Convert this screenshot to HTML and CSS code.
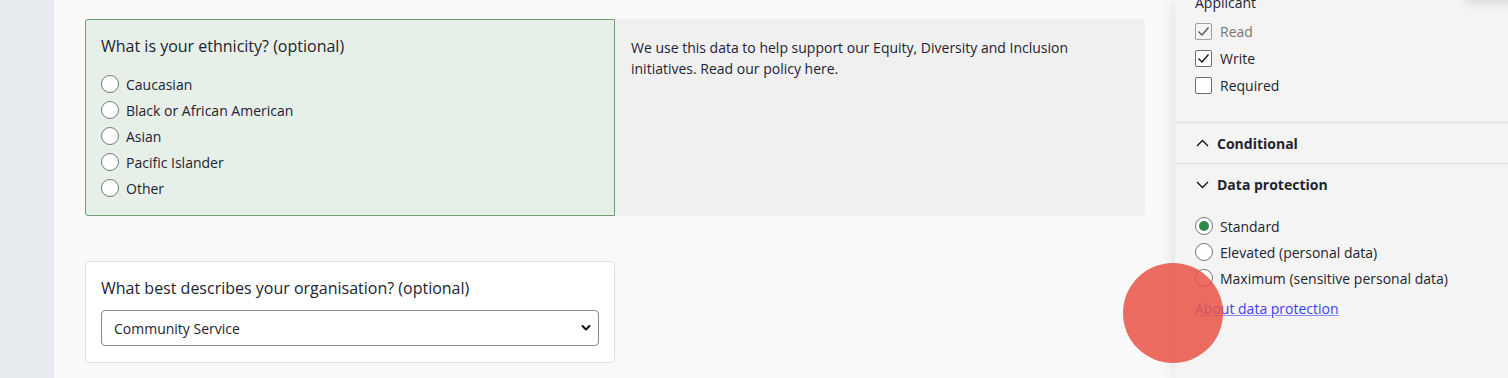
FILE: index.html
```html
<!DOCTYPE html>
<html lang="en">
<head>
<meta charset="utf-8">
<title>Form editor</title>
<link rel="stylesheet" href="styles.css">
</head>
<body>
<div class="app">
  <div class="rail"></div>
  <main class="main">
    <div class="row">
      <section class="card card-active">
        <h2 class="q-title">What is your ethnicity? (optional)</h2>
        <ul class="options">
          <li class="opt"><span class="radio"></span>Caucasian</li>
          <li class="opt"><span class="radio"></span>Black or African American</li>
          <li class="opt"><span class="radio"></span>Asian</li>
          <li class="opt"><span class="radio"></span>Pacific Islander</li>
          <li class="opt"><span class="radio"></span>Other</li>
        </ul>
      </section>
      <aside class="help">
        <p>We use this data to help support our Equity, Diversity and Inclusion initiatives. Read our policy here.</p>
      </aside>
    </div>
    <section class="card card-plain">
      <h2 class="q-title">What best describes your organisation? (optional)</h2>
      <div class="select">
        <span>Community Service</span>
        <svg class="select-chev" width="10" height="8" viewBox="0 0 10 8"><path d="M1.5 2 L5 5.5 L8.5 2" fill="none" stroke="#111" stroke-width="2" stroke-linecap="round" stroke-linejoin="round"/></svg>
      </div>
    </section>
  </main>
  <aside class="side">
    <div class="side-block">
      <div class="side-label">Applicant</div>
      <ul class="checks">
        <li class="check check-disabled"><span class="box"><svg width="13" height="11" viewBox="0 0 13 11"><path d="M1.5 5.5 L5 9 L11.5 1.5" fill="none" stroke="#555" stroke-width="1.3"/></svg></span>Read</li>
        <li class="check"><span class="box"><svg width="13" height="11" viewBox="0 0 13 11"><path d="M1.5 5.5 L5 9 L11.5 1.5" fill="none" stroke="#111" stroke-width="1.3"/></svg></span>Write</li>
        <li class="check"><span class="box"></span>Required</li>
      </ul>
    </div>
    <div class="acc-head acc-border">
      <svg width="13" height="8" viewBox="0 0 13 8"><path d="M1 7 L6.5 1.5 L12 7" fill="none" stroke="#111" stroke-width="1.3"/></svg>
      <span>Conditional</span>
    </div>
    <div class="acc-head">
      <svg width="13" height="8" viewBox="0 0 13 8"><path d="M1 1 L6.5 6.5 L12 1" fill="none" stroke="#111" stroke-width="1.3"/></svg>
      <span>Data protection</span>
    </div>
    <ul class="options side-options">
      <li class="opt"><span class="radio radio-on"></span>Standard</li>
      <li class="opt"><span class="radio"></span>Elevated (personal data)</li>
      <li class="opt"><span class="radio"></span>Maximum (sensitive personal data)</li>
    </ul>
    <a class="link" href="#">About data protection</a>
    <div class="popup-shadow"></div>
  </aside>
  <div class="cursor"></div>
</div>
</body>
</html>
```
FILE: styles.css
```css
* { box-sizing: border-box; }
html, body { margin: 0; padding: 0; }
body {
  font-family: "Open Sans", "Noto Sans", sans-serif;
  color: #1d2430;
  width: 1508px;
  height: 378px;
  overflow: hidden;
  background: #fafafa;
}
.app {
  position: relative;
  display: flex;
  width: 1508px;
  height: 378px;
  overflow: hidden;
}
.rail {
  width: 54px;
  flex: none;
  background: #e8ebef;
}
.main {
  width: 1121px;
  flex: none;
  background: #fafafa;
  padding: 19px 0 0 31px;
}
.row {
  display: flex;
  width: 1060px;
  height: 197px;
}
.card {
  width: 530px;
  border-radius: 4px;
}
.card-active {
  background: #e6efe8;
  border: 1px solid #6c9f70;
  border-radius: 3px 0 0 3px;
  padding: 15px 15px 0 15px;
}
.q-title {
  margin: 0;
  font-size: 16px;
  font-weight: 400;
  line-height: 22px;
}
.options {
  list-style: none;
  margin: 14px 0 0 0;
  padding: 0;
}
.opt {
  display: flex;
  align-items: center;
  height: 26px;
  font-size: 14px;
}
.radio {
  width: 18px;
  height: 18px;
  border: 1px solid #767676;
  border-radius: 50%;
  background: #fff;
  margin-right: 7px;
  flex: none;
  display: flex;
  align-items: center;
  justify-content: center;
}
.radio-on::after {
  content: "";
  width: 10px;
  height: 10px;
  border-radius: 50%;
  background: #2f8a45;
}
.help {
  flex: 1;
  background: #f0f0f0;
  border-radius: 0 4px 4px 0;
  padding: 18px 16px;
}
.help p {
  margin: 0;
  font-size: 14px;
  line-height: 21px;
  width: 460px;
}
.card-plain {
  margin-top: 45px;
  background: #fff;
  border: 1px solid #e2e2e2;
  padding: 15px 15px 15px 15px;
  height: 102px;
}
.select {
  margin-top: 11px;
  height: 36px;
  border: 1px solid #8a8a8a;
  border-radius: 4px;
  background: #fff;
  display: flex;
  align-items: center;
  justify-content: space-between;
  padding: 0 7px 0 12px;
  font-size: 14px;
}
.side {
  position: relative;
  width: 333px;
  flex: none;
  background: #f4f4f4;
  box-shadow: -4px 0 14px rgba(0, 0, 0, 0.09);
}
.side-block {
  padding: 1px 20px 0 20px;
  height: 123px;
  border-bottom: 1px solid #dcdcdc;
}
.side-label {
  font-size: 14px;
  line-height: 22px;
  margin-top: -9px;
}
.checks {
  list-style: none;
  margin: 4px 0 0 0;
  padding: 0;
}
.check {
  display: flex;
  align-items: center;
  height: 27px;
  font-size: 14px;
}
.box {
  width: 17px;
  height: 17px;
  border: 1px solid #6f6f6f;
  border-radius: 2px;
  background: #fff;
  margin-right: 8px;
  display: flex;
  align-items: center;
  justify-content: center;
}
.check-disabled { color: #777; }
.check-disabled .box { border-color: #a0a0a0; background: #f4f4f4; }
.acc-head {
  display: flex;
  align-items: center;
  gap: 8px;
  height: 41px;
  padding: 0 20px 0 21px;
  font-size: 14px;
  font-weight: 700;
}
.acc-border { border-bottom: 1px solid #dcdcdc; }
.side-options {
  margin: 8px 0 0 0;
  padding: 0 20px;
}
.link {
  display: block;
  margin: 8px 20px 0 20px;
  font-size: 14px;
  line-height: 20px;
  color: #3e3ef0;
  text-decoration: underline;
  text-decoration-color: #8a8af5;
}
.popup-shadow {
  position: absolute;
  top: -40px;
  left: 290px;
  width: 120px;
  height: 40px;
  background: #f4f4f4;
  box-shadow: 0 2px 10px rgba(0, 0, 0, 0.12);
}
.cursor {
  position: absolute;
  left: 1123px;
  top: 263px;
  width: 100px;
  height: 100px;
  border-radius: 50%;
  background: rgba(232, 84, 70, 0.85);
}
```
